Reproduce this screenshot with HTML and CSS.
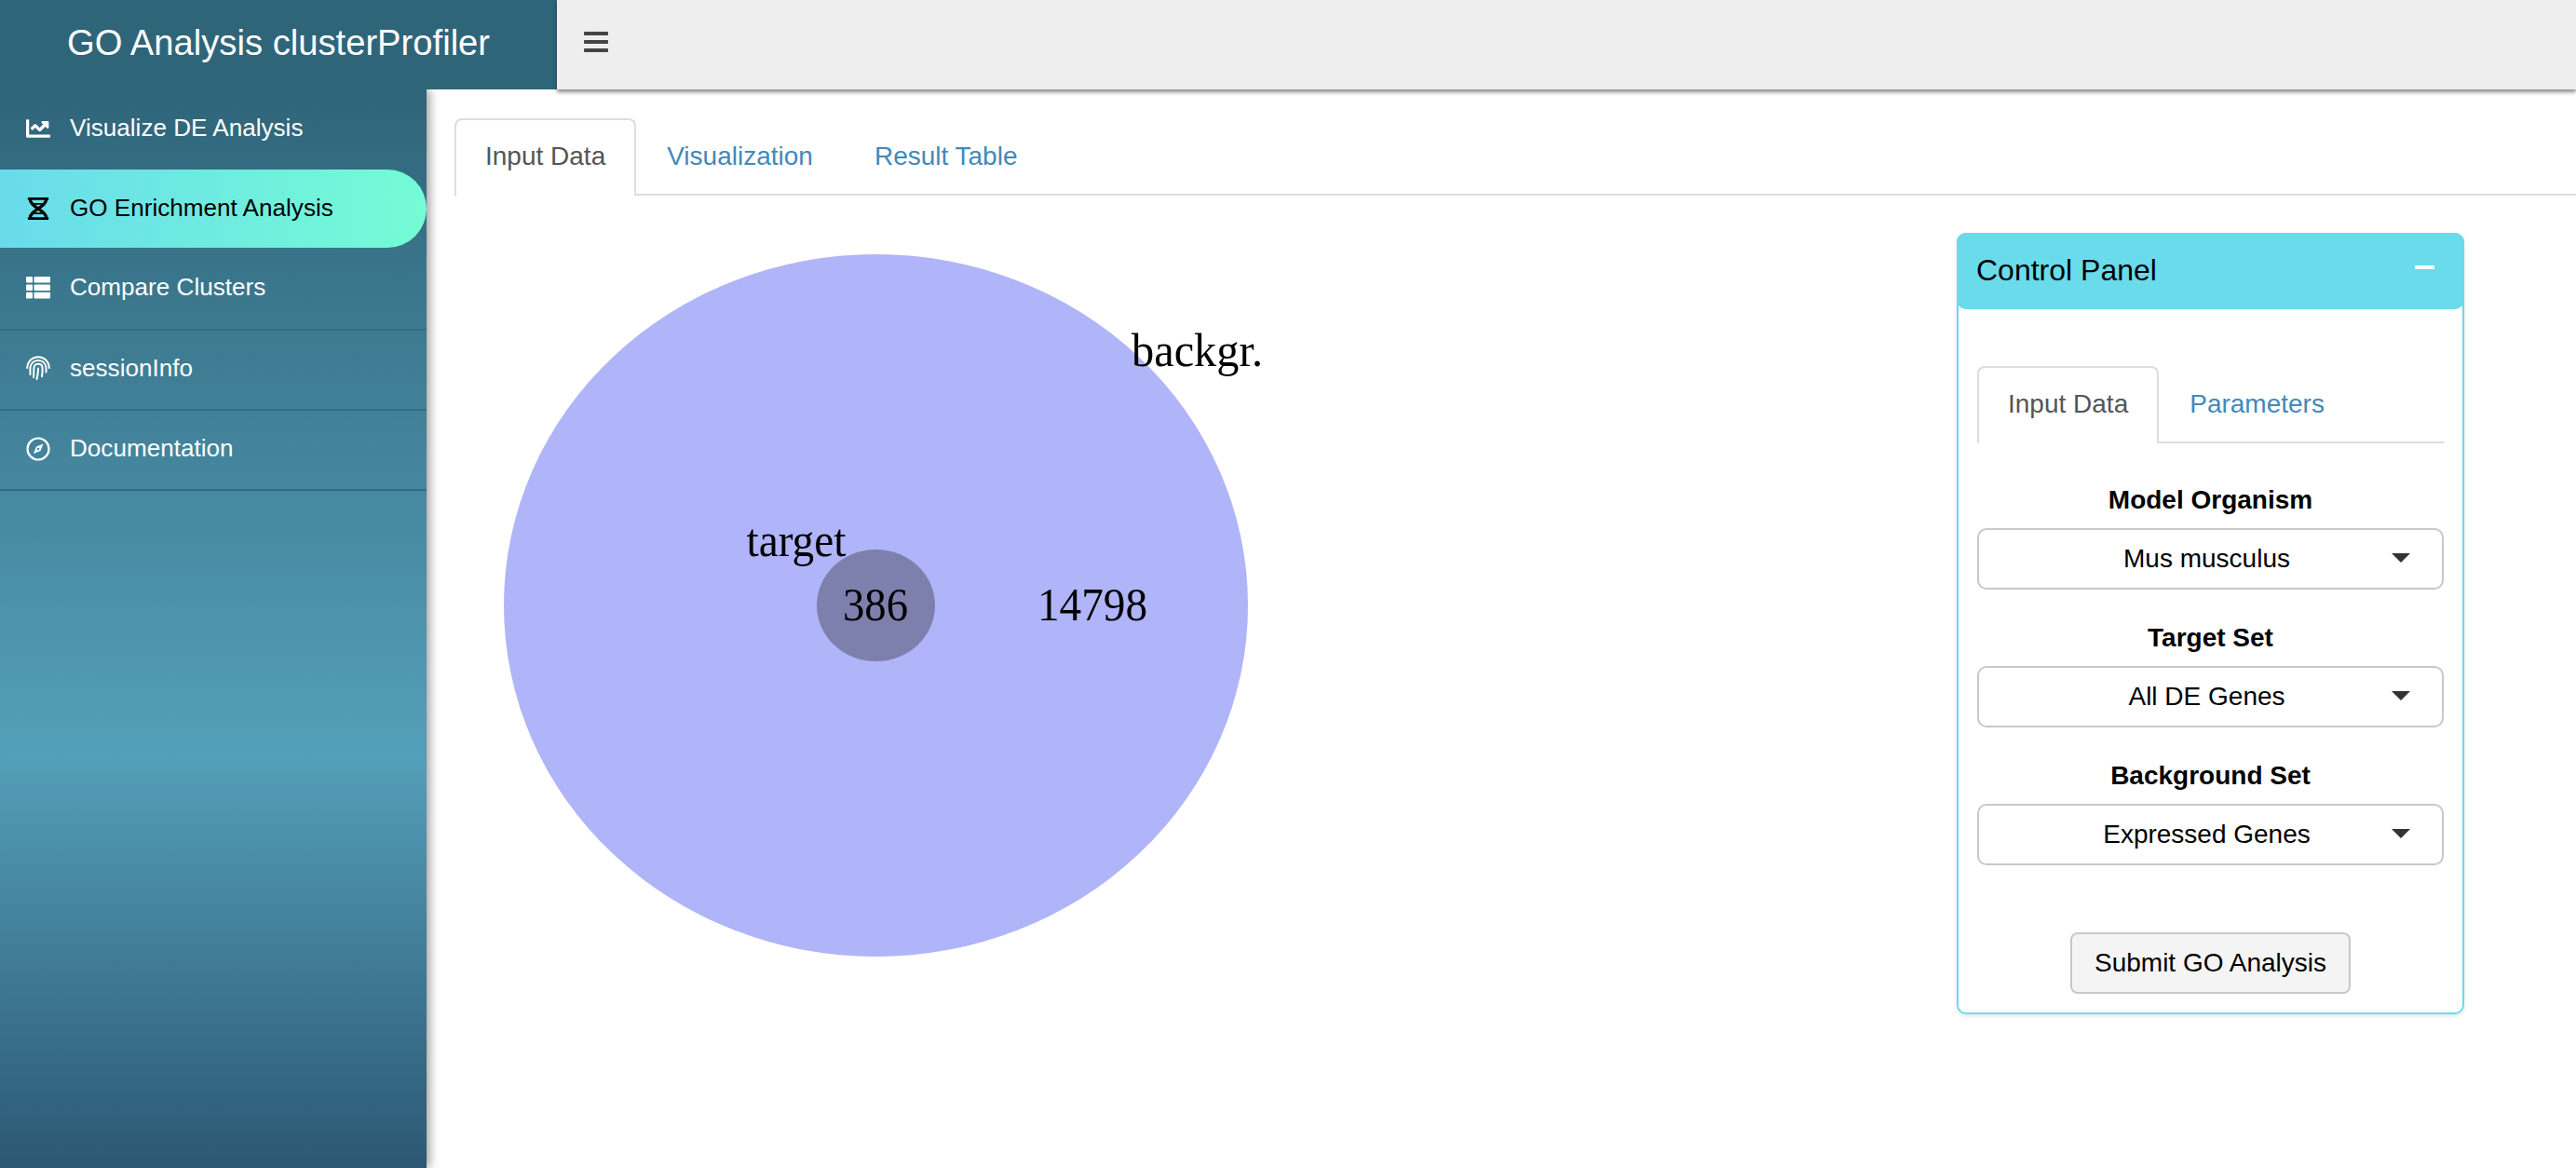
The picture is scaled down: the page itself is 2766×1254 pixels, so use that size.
FILE: index.html
```html
<!DOCTYPE html>
<html lang="en">
<head>
    <meta charset="UTF-8">
    <title>GO Analysis clusterProfiler</title>
    <link rel="stylesheet" href="styles.css">
</head>
<body>
    <header class="top">
        <div class="logo">GO Analysis clusterProfiler</div>
        <nav class="navbar">
            <div class="burger"><span></span><span></span><span></span></div>
        </nav>
    </header>

    <div class="wrapper">
        <aside class="sidebar">
            <a class="menu-item">
                <svg class="icon" viewBox="0 0 512 512" fill="currentColor"><path d="M496 384H64V80c0-8.84-7.16-16-16-16H16C7.16 64 0 71.16 0 80v336c0 17.67 14.33 32 32 32h464c8.84 0 16-7.16 16-16v-32c0-8.84-7.16-16-16-16zM464 96H345.94c-21.38 0-32.09 25.85-16.97 40.97l32.4 32.4L288 242.75l-73.37-73.37c-12.5-12.5-32.76-12.5-45.25 0l-68.69 68.69c-6.25 6.25-6.25 16.38 0 22.63l22.62 22.62c6.25 6.25 16.38 6.25 22.63 0L192 237.25l73.37 73.37c12.5 12.5 32.76 12.5 45.25 0l96-96 32.4 32.4c15.12 15.12 40.97 4.41 40.97-16.97V112c.01-8.84-7.15-16-15.99-16z"/></svg>
                <span>Visualize DE Analysis</span>
            </a>
            <a class="menu-item active">
                <svg class="icon" viewBox="0 0 26 28" fill="none" stroke="currentColor" stroke-width="3.4">
                    <path d="M3.500 3c0 9 19 13 19 22M22.500 3c0 9-19 13-19 22"/>
                    <path d="M1 2.500h24M1 25.500h24" stroke-width="3"/>
                    <path d="M6 8.500h14M6 19.500h14" stroke-width="2"/>
                </svg>
                <span>GO Enrichment Analysis</span>
            </a>
            <a class="menu-item">
                <svg class="icon" viewBox="0 0 26 24" fill="currentColor">
                    <rect x="0" y="0" width="7" height="6.6" rx="1"/><rect x="8.500" y="0" width="17.500" height="6.6" rx="1"/>
                    <rect x="0" y="8.400" width="7" height="6.6" rx="1"/><rect x="8.500" y="8.400" width="17.500" height="6.6" rx="1"/>
                    <rect x="0" y="16.800" width="7" height="6.6" rx="1"/><rect x="8.500" y="16.800" width="17.500" height="6.6" rx="1"/>
                </svg>
                <span>Compare Clusters</span>
            </a>
            <a class="menu-item">
                <svg class="icon" viewBox="0 0 26 26" fill="none" stroke="currentColor" stroke-width="2" stroke-linecap="round">
                    <path d="M1.200 13C1.500 6 6.500 1.200 13 1.200S24.500 6 24.800 13"/>
                    <path d="M4.500 20C4.300 16 4.200 14 4.600 11.500 5.500 7.500 9 5 13 5s7.500 2.500 8.300 6.500c.4 2 .4 4 .2 6"/>
                    <path d="M8 23c.4-3 .3-7 .4-10C8.600 10.500 10.500 8.800 13 8.800s4.500 1.700 4.600 4.500c.1 3-.1 6-.7 9"/>
                    <path d="M11.500 25c.9-3.500 1.500-8 1.500-11.500"/>
                </svg>
                <span>sessionInfo</span>
            </a>
            <a class="menu-item">
                <svg class="icon" viewBox="0 0 26 26" fill="none" stroke="currentColor" stroke-width="2.200">
                    <circle cx="13" cy="13" r="11.500"/>
                    <path d="M18.500 7.500l-3 7.500-7.500 3 3-7.500z" fill="currentColor" stroke="none"/>
                    <circle cx="13" cy="13" r="1.300" fill="#44849f" stroke="none"/>
                </svg>
                <span>Documentation</span>
            </a>
        </aside>

        <main class="content">
            <ul class="tabs main-tabs">
                <li class="tab active">Input Data</li>
                <li class="tab">Visualization</li>
                <li class="tab">Result Table</li>
            </ul>

            <div class="tab-body">
                <svg class="venn" viewBox="0 0 900 800">
                    <ellipse cx="452.500" cy="400" rx="399.500" ry="377" fill="#b0b4f8"/>
                    <ellipse cx="452.500" cy="400" rx="63.500" ry="60" fill="#7d80ad"/>
                    <text x="727" y="143" textLength="141" lengthAdjust="spacingAndGlyphs">backgr.</text>
                    <text x="313.500" y="347" textLength="107" lengthAdjust="spacingAndGlyphs">target</text>
                    <text x="417" y="416" textLength="70" lengthAdjust="spacingAndGlyphs">386</text>
                    <text x="626" y="416" textLength="118" lengthAdjust="spacingAndGlyphs">14798</text>
                </svg>

                <section class="panel">
                    <div class="panel-head">
                        <h3>Control Panel</h3>
                        <span class="minus"></span>
                    </div>
                    <div class="panel-body">
                        <ul class="tabs">
                            <li class="tab active">Input Data</li>
                            <li class="tab">Parameters</li>
                        </ul>
                        <div class="field first">
                            <label>Model Organism</label>
                            <div class="select">Mus musculus</div>
                        </div>
                        <div class="field">
                            <label>Target Set</label>
                            <div class="select">All DE Genes</div>
                        </div>
                        <div class="field">
                            <label>Background Set</label>
                            <div class="select">Expressed Genes</div>
                        </div>
                        <button class="submit">Submit GO Analysis</button>
                    </div>
                </section>
            </div>
        </main>
    </div>
</body>
</html>
```

FILE: styles.css
```css
* {
    box-sizing: border-box;
}

body {
    margin: 0;
    height: 100vh;
    overflow: hidden;
    display: flex;
    flex-direction: column;
    font-family: "Liberation Sans", Arial, sans-serif;
    font-size: 28px;
    background: white;
}

.top {
    display: flex;
    height: 96px;
    position: relative;
    z-index: 3;
}

.logo {
    width: 598px;
    background: #2f6579;
    color: white;
    font-size: 38.2px;
    line-height: 92px;
    text-align: center;
}

.navbar {
    flex: 1;
    display: flex;
    align-items: center;
    padding-left: 29px;
    padding-bottom: 6px;
    background: #eeeeee;
    box-shadow: 0 3px 4px rgba(0,0,0,0.45);
}

.burger {
    width: 26px;
}

.burger span {
    display: block;
    height: 4.5px;
    margin: 4.5px 0;
    background: #444;
    border-radius: 1px;
}

.wrapper {
    flex: 1;
    display: flex;
    min-height: 0;
}

.sidebar {
    width: 458px;
    position: relative;
    z-index: 2;
    background: linear-gradient(to bottom, #2f6579 0%, #549fb9 61.8%, #2c5873 100%);
    box-shadow: 3px 0 10px rgba(0,0,0,0.4);
}

.menu-item {
    display: flex;
    align-items: center;
    height: 86.3px;
    padding-left: 28px;
    padding-bottom: 3px;
    font-size: 26.1px;
    color: white;
    border-bottom: 2px solid #336b85;
}

.menu-item:first-child {
    border-bottom: none;
}

.menu-item.active {
    height: 84px;
    margin-bottom: 2px;
    padding-bottom: 1px;
    color: black;
    border-bottom: none;
    border-radius: 0 42px 42px 0;
    background: linear-gradient(to right, #69dbeb, #74fcd5);
}

.icon {
    width: 26px;
    height: 26px;
    margin-right: 21px;
    flex-shrink: 0;
}

.content {
    flex: 1;
    padding-top: 31px;
    padding-left: 30px;
}

.tabs {
    display: flex;
    margin: 0;
    padding: 0;
    list-style: none;
    border-bottom: 2px solid #dddddd;
    height: 83px;
}

.tab {
    height: 83px;
    padding: 0 31px;
    line-height: 78px;
    color: #4289bb;
    border: 2px solid transparent;
    border-bottom: none;
}

.tab.active {
    color: #555555;
    background: white;
    border-color: #dddddd;
    border-radius: 8px 8px 0 0;
}

.tab-body {
    display: flex;
    justify-content: space-between;
    padding-right: 120px;
    padding-top: 40px;
}

.venn {
    width: 900px;
    height: 800px;
    flex-shrink: 0;
}

.venn text {
    font-family: "Liberation Serif", "Times New Roman", serif;
    font-size: 50px;
    fill: black;
}

.panel {
    width: 545px;
    height: 839px;
    border: 2px solid #69dbeb;
    border-radius: 10px;
    box-shadow: 0 2px 4px rgba(0,0,0,0.1);
}

.panel-head {
    display: flex;
    justify-content: space-between;
    height: 82px;
    margin: -2px -2px 0;
    padding: 0 32px 0 21px;
    background: #69dbeb;
    border-radius: 10px;
}

.panel-head h3 {
    margin: 0;
    font-size: 32px;
    font-weight: normal;
    line-height: 81px;
    color: black;
}

.minus {
    width: 21px;
    height: 4px;
    margin-top: 35px;
    background: white;
    border-radius: 1px;
}

.panel-body {
    padding: 61px 20px 0 20px;
    text-align: center;
}

.panel-body .tabs {
    width: 501px;
}

.field label {
    display: block;
    height: 30px;
    margin-bottom: 15px;
    line-height: 30px;
    font-weight: bold;
    color: black;
}

.field {
    margin-top: 37px;
}

.field.first {
    margin-top: 46px;
}

.select {
    position: relative;
    height: 66px;
    width: 501px;
    padding-right: 8px;
    line-height: 62px;
    color: black;
    border: 2px solid #c8c8c8;
    border-radius: 10px;
    background: white;
}

.select::after {
    content: "";
    position: absolute;
    right: 34px;
    top: 25px;
    border-left: 10px solid transparent;
    border-right: 10px solid transparent;
    border-top: 10px solid #333;
}

.submit {
    display: block;
    width: 301px;
    height: 66px;
    margin: 72px auto 0;
    padding: 0;
    font-family: inherit;
    font-size: 28px;
    color: black;
    background: #f4f4f4;
    border: 2px solid #c8c8c8;
    border-radius: 8px;
}
```
